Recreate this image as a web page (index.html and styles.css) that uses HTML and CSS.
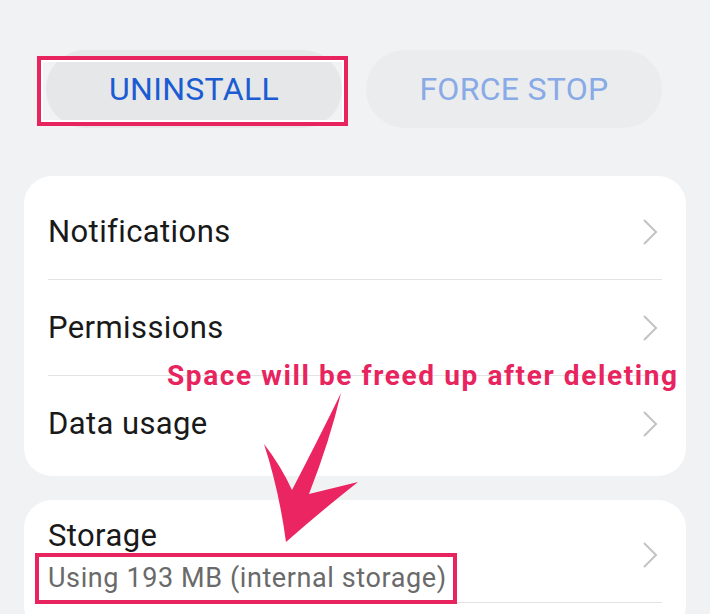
FILE: index.html
```html
<!DOCTYPE html>
<html lang="en">
<head>
  <meta charset="UTF-8">
  <meta name="viewport" content="width=device-width, initial-scale=1.0">
  <title>App info</title>
  <link rel="stylesheet" href="styles.css">
</head>
<body>
  <div class="page">
    <div class="actions">
      <div class="pill primary">
        UNINSTALL
        <span class="mark mark-btn"></span>
      </div>
      <div class="pill">FORCE STOP</div>
    </div>

    <div class="card">
      <div class="row">
        <span class="label">Notifications</span>
        <svg class="chev" viewBox="0 0 16 28"><path d="M2 2 L14 14 L2 26"/></svg>
      </div>
      <div class="line"></div>
      <div class="row">
        <span class="label">Permissions</span>
        <svg class="chev" viewBox="0 0 16 28"><path d="M2 2 L14 14 L2 26"/></svg>
      </div>
      <div class="line"></div>
      <div class="row">
        <span class="label">Data usage</span>
        <svg class="chev" viewBox="0 0 16 28"><path d="M2 2 L14 14 L2 26"/></svg>
      </div>
    </div>

    <div class="card storage">
      <div class="row tall">
        <div class="texts">
          <span class="label">Storage</span>
          <span class="sub">Using 193 MB (internal storage)</span>
        </div>
        <svg class="chev" viewBox="0 0 16 28"><path d="M2 2 L14 14 L2 26"/></svg>
        <span class="mark mark-sub"></span>
      </div>
      <div class="line"></div>
    </div>

    <!-- anotaciones encima -->
    <div class="note">Space will be freed up after deleting</div>
    <svg class="arrow" viewBox="0 0 710 614">
      <path d="M341 393 Q330 440 309 494 L358 482 Q320 512 286 542 Q279 490 264 444 Q281 466 292 490 Q318 440 341 393 Z"/>
    </svg>
  </div>
</body>
</html>
```

FILE: styles.css
```css
body {
  margin: 0;
  background: #f1f2f4;
  font-family: Roboto, "Noto Sans", sans-serif;
  overflow: hidden;
}

.page {
  position: relative;
  width: 710px;
  height: 614px;
  padding: 50px 24px 0;
  box-sizing: border-box;
}

.actions {
  display: flex;
  gap: 24px;
  padding-left: 22px;
}

.pill {
  position: relative;
  width: 296px;
  height: 78px;
  border-radius: 39px;
  background: #ebecee;
  color: #88aae6;
  font-size: 32px;
  letter-spacing: 0.3px;
  display: flex;
  align-items: center;
  justify-content: center;
}

.pill.primary {
  background: #e6e7e9;
  color: #1b5cd3;
}

.mark {
  position: absolute;
  border: 4px solid #e8245f;
  box-shadow: inset 0 0 0 2px #fff;
  box-sizing: border-box;
}

.mark-btn {
  left: -9px;
  top: 6px;
  width: 311px;
  height: 70px;
}

.card {
  background: #fff;
  border-radius: 28px;
  margin-top: 48px;
  padding: 8px 24px 5px;
}

.storage {
  margin-top: 24px;
  padding: 0 24px 30px;
}

.row {
  position: relative;
  height: 95px;
  display: flex;
  align-items: center;
  justify-content: space-between;
}

.row.tall {
  height: 102px;
  align-items: flex-start;
}

.label {
  font-size: 31px;
  letter-spacing: 0.4px;
  color: #191919;
}

.texts {
  display: flex;
  flex-direction: column;
  padding-top: 16px;
}

.texts .label {
  line-height: 40px;
}

.sub {
  font-size: 27px;
  line-height: 36px;
  letter-spacing: 0.6px;
  color: #6a6a6a;
  margin-top: 4px;
}

.chev {
  width: 16px;
  height: 28px;
  margin-right: 4px;
  fill: none;
  stroke: #c3c3c3;
  stroke-width: 2;
}

.row.tall .chev {
  margin-top: 41px;
}

.line {
  height: 1px;
  background: #e3e3e3;
}

.mark-sub {
  left: -13px;
  top: 53px;
  width: 422px;
  height: 51px;
}

.note {
  position: absolute;
  left: 167px;
  top: 359px;
  font-size: 28px;
  font-weight: bold;
  letter-spacing: 1.6px;
  color: #e8245f;
  white-space: nowrap;
}

.arrow {
  position: absolute;
  left: 0;
  top: 0;
  width: 710px;
  height: 614px;
  fill: #ea2561;
}
```
